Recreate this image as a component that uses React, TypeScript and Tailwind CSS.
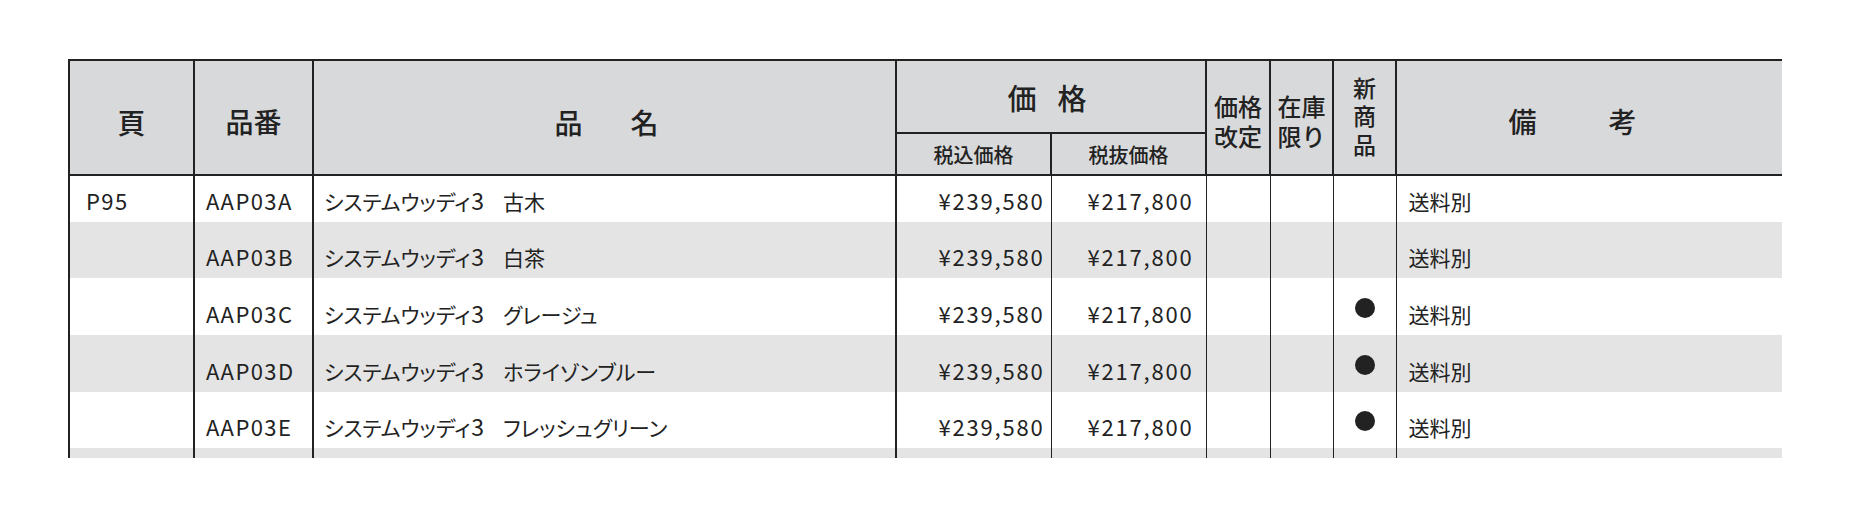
import React from 'react';

type Row = { page?: string; code?: string; color?: string; isNew?: boolean; h: string };

const rows: Row[] = [
  { page: 'P95', code: 'AAP03A', color: '古木', h: 'h-[47px]' },
  { code: 'AAP03B', color: '白茶', h: 'h-[56px]' },
  { code: 'AAP03C', color: 'グレージュ', isNew: true, h: 'h-[57px]' },
  { code: 'AAP03D', color: 'ホライゾンブルー', isNew: true, h: 'h-[57px]' },
  { code: 'AAP03E', color: 'フレッシュグリーン', isNew: true, h: 'h-[56px]' },
  { h: 'h-[56px]' },
];

const th = 'border-2 border-[#222] bg-[#d8d9da] font-medium text-center align-middle p-0';
const td = 'align-bottom pb-[7px] leading-[28px] text-[21px] p-0';
const latin = 'text-[22px] tracking-[1.4px]';

function App() {
  return (
    <div className="w-[1852px] h-[506px] bg-white overflow-hidden pl-[68px] pt-[59px] [font-family:'Noto_Sans_CJK_JP','Noto_Sans',sans-serif] text-[#222]">
      <div className="w-[1714px] h-[399px] overflow-hidden">
        <table className="table-fixed border-collapse w-[1714px]">
          <colgroup>
            <col className="w-[125px]" />
            <col className="w-[119px]" />
            <col className="w-[583px]" />
            <col className="w-[155px]" />
            <col className="w-[155px]" />
            <col className="w-[64px]" />
            <col className="w-[63px]" />
            <col className="w-[63px]" />
            <col className="w-[387px]" />
          </colgroup>
          <thead>
            <tr className="h-[73px]">
              <th rowSpan={2} className={`${th} text-[28px] pt-[8px]`}>頁</th>
              <th rowSpan={2} className={`${th} text-[28px] pt-[6px]`}>品番</th>
              <th rowSpan={2} className={`${th} text-[28px] pt-[8px]`}>
                <div className="flex justify-center gap-[48px] pl-[4px]">
                  <span>品</span>
                  <span>名</span>
                </div>
              </th>
              <th colSpan={2} className={`${th} text-[29px] pt-[2px]`}>
                <div className="flex justify-center gap-[21px] pr-[8px]">
                  <span>価</span>
                  <span>格</span>
                </div>
              </th>
              <th rowSpan={2} className={`${th} text-[24px] leading-[30px] pt-[6px]`}>
                価格<br />改定
              </th>
              <th rowSpan={2} className={`${th} text-[24px] leading-[30px] pt-[6px]`}>
                在庫<br />限り
              </th>
              <th rowSpan={2} className={`${th} text-[23px] leading-[28.5px] pb-[4px]`}>
                新<br />商<br />品
              </th>
              <th rowSpan={2} className={`${th} text-[28px] pt-[6px]`}>
                <div className="flex justify-center gap-[72px] pr-[34px]">
                  <span>備</span>
                  <span>考</span>
                </div>
              </th>
            </tr>
            <tr className="h-[42px]">
              <th className={`${th} text-[20px] pt-[2px]`}>税込価格</th>
              <th className={`${th} text-[20px] pt-[2px]`}>税抜価格</th>
            </tr>
          </thead>
          <tbody>
            {rows.map((r, i) => (
              <tr key={i} className={`${r.h} ${i % 2 === 1 ? 'bg-[#e4e4e4]' : 'bg-white'}`}>
                <td className={`${td} border-l-2 border-r-2 border-[#222] pl-[16px]`}>
                  <span className={latin}>{r.page}</span>
                </td>
                <td className={`${td} border-r-2 border-[#222] pl-[11px]`}>
                  <span className={latin}>{r.code}</span>
                </td>
                <td className={`${td} border-r-2 border-[#222] pl-[10px]`}>
                  {r.code && (
                    <span className="[font-feature-settings:'palt']">
                      システムウッディ<span className="text-[23px] tracking-[1px] pl-[1px]">3</span>
                      <span className="inline-block w-[18px]" />
                      {r.color}
                    </span>
                  )}
                </td>
                <td className={`${td} border-r border-[#222] text-right pr-[6px]`}>
                  <span className="text-[22px] tracking-[1.8px]">{r.code && '¥239,580'}</span>
                </td>
                <td className={`${td} border-r border-[#222] text-right pr-[12px]`}>
                  <span className="text-[22px] tracking-[1.8px]">{r.code && '¥217,800'}</span>
                </td>
                <td className={`${td} border-r border-[#222]`} />
                <td className={`${td} border-r border-[#222]`} />
                <td className={`${td} border-r border-[#222] pb-[17px]`}>
                  {r.isNew && <div className="mx-auto w-[20px] h-[20px] rounded-full bg-[#222]" />}
                </td>
                <td className={`${td} border-r-2 border-[#222] pl-[12px]`}>{r.code && '送料別'}</td>
              </tr>
            ))}
          </tbody>
        </table>
      </div>
    </div>
  );
}

export default App;
